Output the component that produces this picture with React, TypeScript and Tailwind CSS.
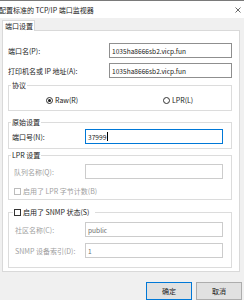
const Field = ({
  value,
  disabled,
  focused,
  className = "",
}: {
  value: string;
  disabled?: boolean;
  focused?: boolean;
  className?: string;
}) => (
  <div
    className={`flex h-[15px] items-center border bg-white pl-[2px] text-[6.6px] ${
      focused
        ? "border-[#0078d7]"
        : disabled
          ? "border-[#cccccc] text-[#6d6d6d]"
          : "border-[#8f8f8f]"
    } ${className}`}
  >
    <span>{value}</span>
    {focused && <span className="ml-[1px] h-[9px] w-px bg-black"></span>}
  </div>
);

const Check = ({ disabled }: { disabled?: boolean }) => (
  <span
    className={`mr-[2px] inline-block h-[7px] w-[7px] shrink-0 border bg-white ${
      disabled ? "border-[#bcbcbc]" : "border-[#333333]"
    }`}
  ></span>
);

const Radio = ({ checked }: { checked?: boolean }) => (
  <span className="mr-[2px] flex h-[7px] w-[7px] shrink-0 items-center justify-center rounded-full border border-[#333333] bg-white">
    {checked && <span className="h-[3px] w-[3px] rounded-full bg-[#1a1a1a]"></span>}
  </span>
);

export default function App() {
  return (
    <div className="flex h-[300px] w-[244px] flex-col overflow-hidden bg-[#f0f0f0] font-['Noto_Sans_CJK_SC',sans-serif] text-[7px] leading-[10px] text-[#1a1a1a]">
      {/* Title bar */}
      <div className="flex h-[18px] shrink-0 items-center justify-between border-t border-[#7a7a7a] bg-white pr-[3px]">
        <span className="-ml-[1px]">配置标准的 TCP/IP 端口监视器</span>
        <svg width="6" height="6" viewBox="0 0 6 6">
          <path d="M0.5 0.5L5.5 5.5M5.5 0.5L0.5 5.5" stroke="#444" strokeWidth="0.8" />
        </svg>
      </div>

      {/* Tab */}
      <div className="relative z-10 -mb-px ml-[2px] mt-[2px] flex h-[11px] w-[33px] items-center border border-b-0 border-[#d9d9d9] bg-white pl-[2px]">
        端口设置
      </div>

      {/* Panel */}
      <div className="ml-[2px] flex h-[242px] w-[238px] flex-col border border-[#d9d9d9] bg-white pl-[5px] pr-[7px] pt-[12px]">
        <div className="flex items-center">
          <span className="w-[101px]">端口名(P):</span>
          <Field value="1035ha8666sb2.vicp.fun" className="flex-1" />
        </div>
        <div className="mt-[5px] flex items-center">
          <span className="w-[101px]">打印机名或 IP 地址(A):</span>
          <Field value="1035ha8666sb2.vicp.fun" className="flex-1" />
        </div>

        {/* 协议 */}
        <div className="mt-[7px] h-[26px] border border-[#dcdcdc]">
          <div className="-mt-[6px] ml-[2px] w-fit bg-white px-[1px]">协议</div>
          <div className="mt-[5px] flex h-[10px] items-center pl-[37px]">
            <div className="flex w-[117px] items-center">
              <Radio checked />
              Raw(R)
            </div>
            <div className="flex items-center">
              <Radio />
              LPR(L)
            </div>
          </div>
        </div>

        {/* 原始设置 */}
        <div className="mt-[11px] h-[27px] border border-[#dcdcdc]">
          <div className="-mt-[6px] ml-[2px] w-fit bg-white px-[1px]">原始设置</div>
          <div className="mt-[2px] flex items-center">
            <span className="w-[76px] pl-[3px]">端口号(N):</span>
            <Field value="37999" focused className="w-[138px]" />
          </div>
        </div>

        {/* LPR 设置 */}
        <div className="mt-[6px] h-[45px] border border-[#dcdcdc]">
          <div className="-mt-[6px] ml-[2px] w-fit bg-white px-[1px]">LPR 设置</div>
          <div className="mt-[4px] flex items-center">
            <span className="w-[76px] pl-[5px] text-[#a0a0a0]">队列名称(Q):</span>
            <Field value="" disabled className="w-[138px]" />
          </div>
          <div className="mt-[7px] flex h-[10px] items-center pl-[5px] text-[#a0a0a0]">
            <Check disabled />
            启用了 LPR 字节计数(B)
          </div>
        </div>

        {/* SNMP */}
        <div className="mt-[12px] h-[56px] border border-[#dcdcdc]">
          <div className="-mt-[6px] ml-[4px] flex w-fit items-center bg-white px-[1px] pr-[6px]">
            <Check />
            启用了 SNMP 状态(S)
          </div>
          <div className="mt-[5px] flex items-center">
            <span className="w-[76px] pl-[6px] text-[#a0a0a0]">社区名称(C):</span>
            <Field value="public" disabled className="w-[138px]" />
          </div>
          <div className="mt-[6px] flex items-center">
            <span className="w-[76px] pl-[6px] text-[#a0a0a0]">SNMP 设备索引(D):</span>
            <Field value="1" disabled className="w-[138px]" />
          </div>
        </div>
      </div>

      {/* Buttons */}
      <div className="mt-[10px] flex justify-end gap-[4px] pr-[2px]">
        <button className="flex h-[18px] w-[46px] items-center justify-center border border-[#0078d7] bg-[#e1e1e1]">
          确定
        </button>
        <button className="flex h-[18px] w-[46px] items-center justify-center border border-[#adadad] bg-[#e1e1e1]">
          取消
        </button>
      </div>
    </div>
  );
}
